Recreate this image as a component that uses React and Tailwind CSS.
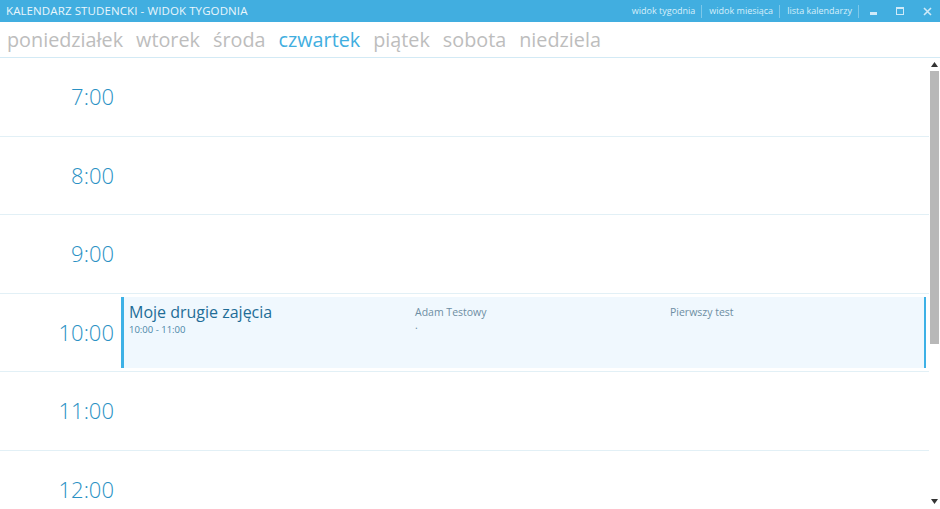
import React from 'react';

const days = ['poniedziałek', 'wtorek', 'środa', 'czwartek', 'piątek', 'sobota', 'niedziela'];
const hours = ['7:00', '8:00', '9:00', '10:00', '11:00', '12:00', '13:00'];

const TitleBar = () => (
    <div className="h-[22px] bg-[#41aee0] flex items-center pl-[6px] pr-[8px] text-white">
        <span className="text-[11.5px] tracking-[0.1px] text-[#eaf6fc]">KALENDARZ STUDENCKI - WIDOK TYGODNIA</span>
        <div className="ml-auto flex items-center text-[9px] text-[#d6eefa]">
            <span className="pl-[7px] pr-[6px]">widok tygodnia</span>
            <span className="w-px h-[13px] bg-[#7cc8ea]"></span>
            <span className="pl-[7px] pr-[6px]">widok miesiąca</span>
            <span className="w-px h-[13px] bg-[#7cc8ea]"></span>
            <span className="pl-[7px] pr-[6px]">lista kalendarzy</span>
            <span className="w-px h-[13px] bg-[#7cc8ea]"></span>
            <span className="ml-[11px] w-[7px] h-[3px] bg-[#cfeaf8] mt-[5px]"></span>
            <span className="ml-[19px] w-[8px] h-[8px] border border-[#cfeaf8] border-t-2"></span>
            <svg className="ml-[19px]" width="9" height="9" viewBox="0 0 9 9">
                <path d="M1 1L8 8M8 1L1 8" stroke="#cfeaf8" strokeWidth="1.6" />
            </svg>
        </div>
    </div>
);

const DaysBar = () => (
    <div className="h-[36px] border-b border-[#d3eaf5] flex items-center pl-[7px] gap-[13px] text-[19.8px] text-[#bdbdbd]">
        {days.map(day => (
            <span key={day} className={day === 'czwartek' ? 'text-[#41aee0]' : ''}>{day}</span>
        ))}
    </div>
);

const Event = () => (
    <div className="flex-1 my-[3px] mr-[3px] bg-[#f0f8fe] border-l-[3px] border-r-2 border-[#3db1e6] flex pt-[6px] pl-[5px]">
        <div className="w-[286px]">
            <div className="text-[16px] leading-[19px] text-[#1f6d97]">Moje drugie zajęcia</div>
            <div className="mt-[2px] text-[9.5px] leading-[12px] text-[#4a86a8]">10:00 - 11:00</div>
        </div>
        <div className="w-[255px] text-[10.5px] text-[#6d8ea3] pt-[3px]">
            <div className="leading-[13px]">Adam Testowy</div>
            <div className="leading-[12px]">.</div>
        </div>
        <div className="text-[10.5px] leading-[13px] text-[#6d8ea3] pt-[3px]">Pierwszy test</div>
    </div>
);

const Scrollbar = () => (
    <div className="w-[11px] flex flex-col items-center">
        <svg className="mt-[4px]" width="7" height="5" viewBox="0 0 7 5">
            <path d="M3.5 0L7 5H0Z" fill="#333" />
        </svg>
        <div className="mt-[4px] w-[9px] h-[273px] bg-[#b8b8b8]"></div>
        <svg className="mt-auto mb-[5px]" width="7" height="5" viewBox="0 0 7 5">
            <path d="M0 0H7L3.5 5Z" fill="#333" />
        </svg>
    </div>
);

const App = () => {
    return (
        <div className="w-[940px] h-[509px] overflow-hidden bg-white flex flex-col" style={{ fontFamily: '"Open Sans", "Noto Sans", sans-serif' }}>
            <TitleBar />
            <DaysBar />
            <div className="flex-1 flex min-h-0">
                <div className="flex-1 overflow-hidden">
                    {hours.map(hour => (
                        <div key={hour} className="h-[78.5px] border-b border-[#e2f0f6] flex">
                            <div className="w-[121px] shrink-0 flex items-center justify-end pr-[7px] text-[22px] font-light text-[#2a91c4]">
                                {hour}
                            </div>
                            {hour === '10:00' && <Event />}
                        </div>
                    ))}
                </div>
                <Scrollbar />
            </div>
        </div>
    );
};

export default App;
